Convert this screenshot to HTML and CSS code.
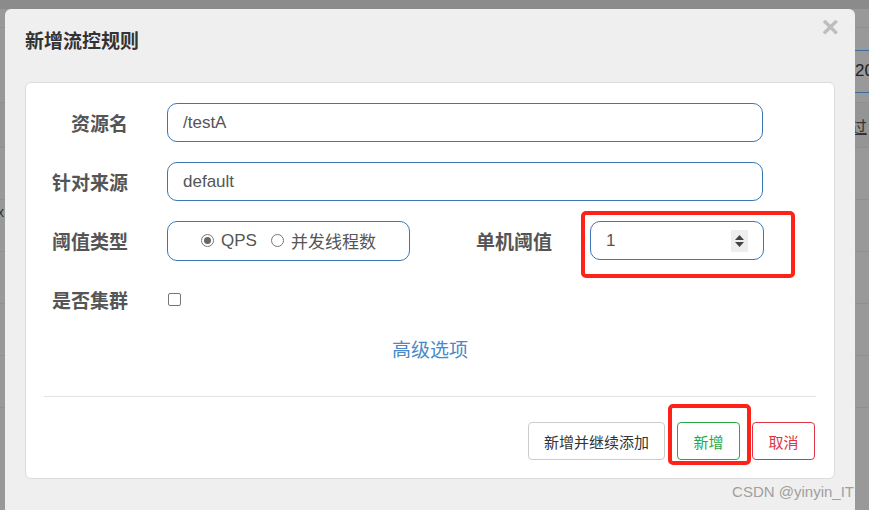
FILE: index.html
```html
<!DOCTYPE html>
<html lang="zh">
<head>
    <meta charset="UTF-8">
    <title>新增流控规则</title>
    <link rel="stylesheet" href="styles.css">
</head>
<body>
    <!-- 背后的页面（被遮罩） -->
    <div class="page">
        <div class="page-top"></div>
        <div class="page-row r1"></div>
        <div class="page-row r2"><span class="edge-text">20</span></div>
        <div class="page-row r3"><span class="edge-link">过</span></div>
        <div class="page-row"></div>
        <div class="page-row"><span class="left-x">x</span></div>
        <div class="page-row"></div>
        <div class="page-row"></div>
        <div class="page-row"></div>
    </div>

    <!-- 弹窗 -->
    <div class="modal">
        <div class="modal-header">
            <h4 class="modal-title">新增流控规则</h4>
            <span class="close">×</span>
        </div>
        <div class="modal-card">
            <div class="form-row">
                <label class="form-label">资源名</label>
                <div class="form-input">/testA</div>
            </div>
            <div class="form-row">
                <label class="form-label">针对来源</label>
                <div class="form-input">default</div>
            </div>
            <div class="form-row">
                <label class="form-label">阈值类型</label>
                <div class="radio-box">
                    <span class="radio checked"></span><span class="radio-text">QPS</span>
                    <span class="radio"></span><span class="radio-text">并发线程数</span>
                </div>
                <label class="form-label wide">单机阈值</label>
                <div class="number-wrap">
                    <div class="form-input number">
                        <span>1</span>
                        <span class="spinner">
                            <svg width="11" height="14" viewBox="0 0 11 14"><path d="M5.5 1 L10 6 H1 Z M1 8 H10 L5.5 13 Z" fill="#444"/></svg>
                        </span>
                    </div>
                    <div class="mark-box"></div>
                </div>
            </div>
            <div class="form-row">
                <label class="form-label">是否集群</label>
                <span class="checkbox"></span>
            </div>
            <div class="advanced">高级选项</div>
            <div class="divider"></div>
            <div class="footer">
                <button class="btn">新增并继续添加</button>
                <div class="btn-wrap">
                    <button class="btn btn-success">新增</button>
                    <div class="mark-box btn-mark"></div>
                </div>
                <button class="btn btn-danger">取消</button>
            </div>
        </div>
        <div class="watermark">CSDN @yinyin_IT</div>
    </div>
</body>
</html>
```

FILE: styles.css
```css
body {
    margin: 0;
    width: 869px;
    height: 510px;
    overflow: hidden;
    position: relative;
    background: #999999;
    font-family: "Liberation Sans", "Noto Sans CJK SC", sans-serif;
}

/* 背景页面 */
.page-top {
    height: 9px;
    background: #8b8b8b;
}

.page-row {
    height: 51px;
    border-bottom: 1px solid #8f8f8f;
    position: relative;
}

.page-row.r1 {
    height: 18px;
}

.page-row.r2 {
    height: 74px;
}

.page-row.r3 {
    height: 44px;
    background: #959595;
}

.edge-text {
    position: absolute;
    right: -6px;
    top: 22px;
    font-size: 17px;
    color: #222;
    border-top: 1px solid #3c6c9c;
    border-bottom: 1px solid #3c6c9c;
    padding: 10px 0 11px 2px;
    width: 20px;
    line-height: 20px;
}

.edge-link {
    position: absolute;
    right: 2px;
    top: 11px;
    font-size: 16px;
    color: #333;
    text-decoration: underline;
}

.left-x {
    position: absolute;
    left: -3px;
    top: 4px;
    font-size: 14px;
    color: #333;
}

/* 弹窗 */
.modal {
    position: absolute;
    left: 5px;
    top: 9px;
    width: 850px;
    height: 510px;
    background: #efefef;
    border-radius: 6px;
    box-sizing: border-box;
    padding: 0 20px;
}

.modal-header {
    height: 73px;
    position: relative;
}

.modal-title {
    margin: 0;
    padding: 21px 0 0 0;
    font-size: 19px;
    line-height: 24px;
    font-weight: bold;
    color: #333;
}

.close {
    position: absolute;
    right: -4px;
    top: 3px;
    font-size: 30px;
    font-weight: bold;
    color: #bdbdbd;
    line-height: 30px;
}

.modal-card {
    background: #fff;
    border: 1px solid #dcdcdc;
    border-radius: 6px;
    padding: 20px 18px 18px 18px;
}

.form-row {
    display: flex;
    align-items: center;
    height: 39px;
    margin-bottom: 20px;
}

.form-label {
    width: 84px;
    text-align: right;
    font-size: 19px;
    font-weight: bold;
    color: #555;
    margin-right: 39px;
    flex-shrink: 0;
}

.form-label.wide {
    width: 142px;
    margin-right: 38px;
}

.form-input {
    width: 596px;
    height: 39px;
    box-sizing: border-box;
    border: 1px solid #3a78b5;
    border-radius: 10px;
    padding: 0 15px;
    display: flex;
    align-items: center;
    font-size: 17px;
    color: #555;
}

.radio-box {
    width: 243px;
    height: 40px;
    box-sizing: border-box;
    border: 1px solid #3a78b5;
    border-radius: 10px;
    display: flex;
    align-items: center;
    justify-content: center;
    font-size: 17px;
    color: #555;
}

.radio {
    width: 11px;
    height: 11px;
    border: 1px solid #777;
    border-radius: 50%;
    box-sizing: content-box;
    margin-right: 7px;
    position: relative;
}

.radio.checked::after {
    content: "";
    position: absolute;
    left: 2px;
    top: 2px;
    width: 7px;
    height: 7px;
    border-radius: 50%;
    background: #666;
}

.radio-text {
    margin-right: 14px;
}

.radio-text:last-child {
    margin-right: 0;
}

.number-wrap {
    position: relative;
}

.form-input.number {
    width: 174px;
    justify-content: space-between;
    padding-right: 15px;
}

.spinner {
    width: 17px;
    height: 22px;
    background: #eeeeee;
    display: flex;
    align-items: center;
    justify-content: center;
}

.mark-box {
    position: absolute;
    left: -9px;
    top: -10px;
    width: 214px;
    height: 67px;
    box-sizing: border-box;
    border: 4px solid #ff2218;
    border-radius: 5px;
}

.checkbox {
    width: 11px;
    height: 11px;
    border: 1px solid #767676;
    border-radius: 2px;
    margin-left: 1px;
}

.advanced {
    text-align: center;
    font-size: 19px;
    color: #4a88c7;
    margin-top: 10px;
    height: 24px;
    line-height: 24px;
}

.divider {
    border-top: 1px solid #e3e3e3;
    margin-top: 33px;
}

.footer {
    display: flex;
    justify-content: flex-end;
    gap: 12px;
    margin-top: 25px;
    padding-right: 1px;
}

.btn {
    height: 38px;
    padding: 0 15px;
    background: #fff;
    border: 1px solid #ccc;
    border-radius: 4px;
    font-family: "Liberation Sans", "Noto Sans CJK SC", sans-serif;
    font-size: 15px;
    color: #333;
}

.btn-wrap {
    position: relative;
}

.btn-success {
    border-color: #28a745;
    color: #28a745;
    width: 63px;
    padding: 0;
}

.btn-danger {
    border-color: #dc3545;
    color: #dc3545;
    width: 63px;
    padding: 0;
}

.btn-mark {
    left: -9px;
    top: -18px;
    width: 83px;
    height: 61px;
}

.watermark {
    position: absolute;
    right: 1px;
    top: 474px;
    font-size: 15px;
    color: #a0a0a0;
}
```
